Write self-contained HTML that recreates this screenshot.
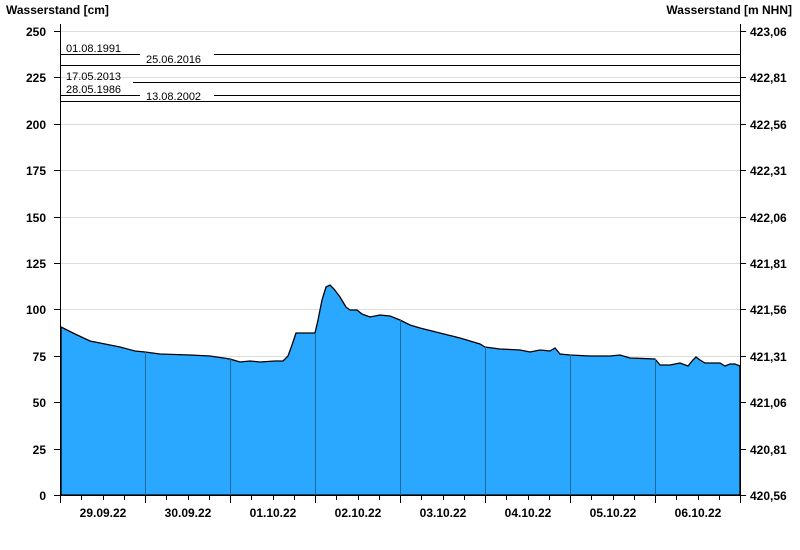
<!DOCTYPE html><html><head><style>body{margin:0;background:#fff}svg{display:block}text{font-family:"Liberation Sans",Arial,sans-serif}</style></head><body>
<svg width="800" height="550" xmlns="http://www.w3.org/2000/svg">
<g stroke="#dddddd" stroke-width="1">
<line x1="61" y1="31.5" x2="740" y2="31.5"/><line x1="61" y1="77.5" x2="740" y2="77.5"/><line x1="61" y1="124.5" x2="740" y2="124.5"/><line x1="61" y1="170.5" x2="740" y2="170.5"/><line x1="61" y1="217.5" x2="740" y2="217.5"/><line x1="61" y1="263.5" x2="740" y2="263.5"/><line x1="61" y1="309.5" x2="740" y2="309.5"/><line x1="61" y1="356.5" x2="740" y2="356.5"/><line x1="61" y1="402.5" x2="740" y2="402.5"/><line x1="61" y1="449.5" x2="740" y2="449.5"/>
</g>
<path d="M61,327 L65,329 L75,334 L90,341 L105,344 L120,347 L135,351 L145,352 L160,354 L190,355 L210,356 L230,359 L240,362 L250,361 L260,362 L275,361 L283,361 L288,356 L292,345 L296,333 L315,333 L318,320 L322,300 L326,287 L330,285 L334,289 L340,297 L346,307 L350,310 L357,310 L362,314 L370,317 L380,315 L390,316 L400,320 L410,325 L420,328 L440,333 L460,338 L470,341 L480,344 L485,347 L500,349 L520,350 L530,352 L540,350 L550,351 L555,348 L560,354 L570,355 L590,356 L610,356 L620,355 L630,358 L655,359 L660,365 L670,365 L680,363 L688,366 L693,360 L696,357 L700,360 L705,363 L720,363 L725,366 L730,364 L735,364 L740,366 L740,495 L61,495 Z" fill="#2aa8ff" stroke="#000" stroke-width="1.3"/>
<g stroke="#1f6a9a" stroke-width="1">
<line x1="145.5" y1="352" x2="145.5" y2="495"/><line x1="230.5" y1="359" x2="230.5" y2="495"/><line x1="315.5" y1="333" x2="315.5" y2="495"/><line x1="400.5" y1="320" x2="400.5" y2="495"/><line x1="485.5" y1="347" x2="485.5" y2="495"/><line x1="570.5" y1="355" x2="570.5" y2="495"/><line x1="655.5" y1="359" x2="655.5" y2="495"/>
</g>
<g stroke="#000" stroke-width="1">
<line x1="61" y1="54.5" x2="140" y2="54.5"/><line x1="214" y1="54.5" x2="740" y2="54.5"/>
<line x1="61" y1="65.5" x2="740" y2="65.5"/>
<line x1="133" y1="82.5" x2="740" y2="82.5"/>
<line x1="61" y1="95.5" x2="140" y2="95.5"/><line x1="214" y1="95.5" x2="740" y2="95.5"/>
<line x1="61" y1="101.5" x2="740" y2="101.5"/>
<line x1="60.5" y1="24" x2="60.5" y2="495"/><line x1="740.5" y1="24" x2="740.5" y2="495"/>
<line x1="60" y1="495.5" x2="741" y2="495.5"/>
</g>
<g font-size="11" fill="#000">
<text x="66" y="52">01.08.1991</text><text x="146" y="63">25.06.2016</text><text x="66" y="80">17.05.2013</text><text x="66" y="93">28.05.1986</text><text x="146" y="100">13.08.2002</text>
</g>
<g stroke="#000" stroke-width="1">
<path d="M54,31.5h6M54,77.5h6M54,124.5h6M54,170.5h6M54,217.5h6M54,263.5h6M54,309.5h6M54,356.5h6M54,402.5h6M54,449.5h6M54,495.5h6"/>
<path d="M741,31.5h5M741,77.5h5M741,124.5h5M741,170.5h5M741,217.5h5M741,263.5h5M741,309.5h5M741,356.5h5M741,402.5h5M741,449.5h5M741,495.5h5"/>
<path d="M60.5,496v7M145.5,496v7M230.5,496v7M315.5,496v7M400.5,496v7M485.5,496v7M570.5,496v7M655.5,496v7M740.5,496v7"/>
<path d="M81.5,496v4M103.5,496v4M124.5,496v4M166.5,496v4M188.5,496v4M209.5,496v4M251.5,496v4M273.5,496v4M294.5,496v4M336.5,496v4M358.5,496v4M379.5,496v4M421.5,496v4M443.5,496v4M464.5,496v4M506.5,496v4M528.5,496v4M549.5,496v4M591.5,496v4M613.5,496v4M634.5,496v4M676.5,496v4M698.5,496v4M719.5,496v4"/>
</g>
<g font-size="12" font-weight="bold" fill="#000">
<text x="6" y="14">Wasserstand [cm]</text>
<text x="792" y="14" text-anchor="end">Wasserstand [m NHN]</text>
<g text-anchor="end">
<text x="46" y="36">250</text><text x="46" y="82">225</text><text x="46" y="129">200</text><text x="46" y="175">175</text><text x="46" y="222">150</text><text x="46" y="268">125</text><text x="46" y="314">100</text><text x="46" y="361">75</text><text x="46" y="407">50</text><text x="46" y="454">25</text><text x="46" y="500">0</text>
</g>
<text x="750" y="36">423,06</text><text x="750" y="82">422,81</text><text x="750" y="129">422,56</text><text x="750" y="175">422,31</text><text x="750" y="222">422,06</text><text x="750" y="268">421,81</text><text x="750" y="314">421,56</text><text x="750" y="361">421,31</text><text x="750" y="407">421,06</text><text x="750" y="454">420,81</text><text x="750" y="500">420,56</text>
<g text-anchor="middle">
<text x="103" y="517">29.09.22</text><text x="188" y="517">30.09.22</text><text x="273" y="517">01.10.22</text><text x="358" y="517">02.10.22</text><text x="443" y="517">03.10.22</text><text x="528" y="517">04.10.22</text><text x="613" y="517">05.10.22</text><text x="698" y="517">06.10.22</text>
</g>
</g>
</svg>
</body></html>
